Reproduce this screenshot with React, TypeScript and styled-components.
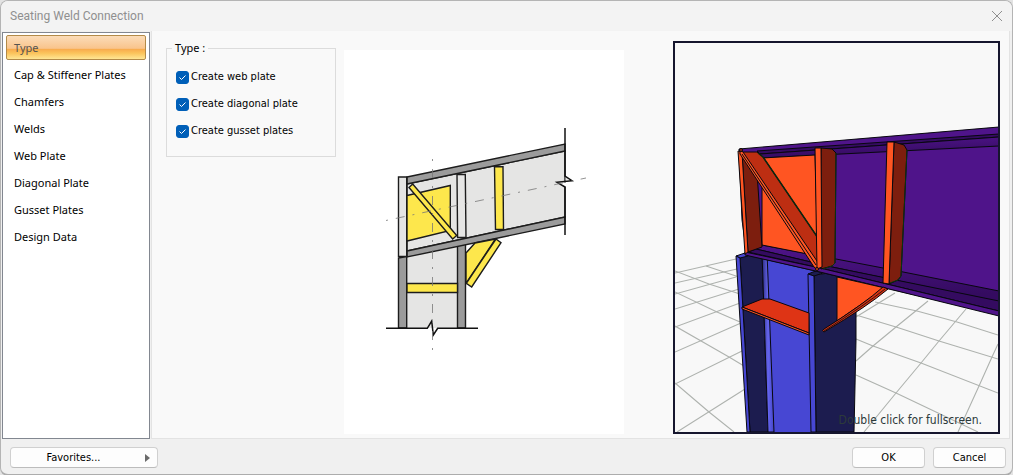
import React, { useState } from "react";
import styled, { createGlobalStyle } from "styled-components";

const GlobalStyle = createGlobalStyle`
  * { box-sizing: border-box; }
  body { margin: 0; background: #e3e3e3; }
`;

const uiFont = `"Noto Sans", "Open Sans", sans-serif`;
const formFont = `"DejaVu Sans Condensed", "DejaVu Sans", sans-serif`;

const Dialog = styled.div`
  display: flex;
  flex-direction: column;
  min-height: 100vh;
  background: #f0f0f0;
  border: 1px solid #b4b4b4;
  border-bottom: 2px solid #acacac;
  border-radius: 8px;
  font-family: ${uiFont};
  font-size: 11px;
  color: #000;
  overflow: hidden;
`;

const TitleBar = styled.header`
  display: flex;
  align-items: center;
  justify-content: space-between;
  height: 30px;
  padding: 0 9px;
  background: #f3f3f3;
`;

const Title = styled.h1`
  margin: 0;
  font-family: Roboto, ${uiFont};
  font-size: 12px;
  line-height: 16px;
  font-weight: 400;
  color: #8f8f8f;
`;

const CloseButton = styled.button`
  display: flex;
  padding: 0;
  border: 0;
  background: none;
`;

const Body = styled.div`
  display: flex;
  flex: 1;
  gap: 1px;
  padding: 0 2px 0 1px;
`;

const Sidebar = styled.nav`
  flex: none;
  width: 148px;
  margin-top: 1px;
  padding: 2px 3px;
  background: #fff;
  border: 1px solid #828790;
`;

const NavList = styled.ul`
  display: flex;
  flex-direction: column;
  gap: 2px;
  margin: 0;
  padding: 0;
  list-style: none;
`;

const NavItem = styled.button<{ $active: boolean }>`
  display: block;
  width: 100%;
  height: 25px;
  padding: 0 7px;
  border: 1px solid ${(p) => (p.$active ? "#b38a48" : "transparent")};
  border-radius: 2px;
  background: ${(p) =>
    p.$active
      ? "linear-gradient(#fbdcb8 0, #f9c48c 54%, #f8a94c 56%, #fbc45c 75%, #ffe694 100%)"
      : "transparent"};
  color: ${(p) => (p.$active ? "#56534f" : "#000")};
  font-family: inherit;
  font-size: 11px;
  line-height: 16px;
  text-align: left;
`;

const Page = styled.main`
  display: flex;
  flex: 1;
  align-items: flex-start;
  min-width: 0;
  padding: 10px 9px 4px 14px;
  background: #f9f9f9;
  border: solid #e3e3e3;
  border-width: 0 1px 1px;
`;

const Group = styled.fieldset`
  flex: none;
  width: 170px;
  margin: 0;
  padding: 15px 9px 18px;
  border: 1px solid #dcdcdc;
`;

const Legend = styled.legend`
  margin-left: -4px;
  padding: 0 3px;
  font-size: 11px;
  line-height: 14px;
`;

const CheckRow = styled.label`
  display: flex;
  align-items: center;
  gap: 2px;
  height: 14px;
  font-family: ${formFont};
  line-height: 14px;
  white-space: nowrap;
  & + & { margin-top: 13px; }
`;

const CheckBox = styled.span`
  display: grid;
  width: 13px;
  height: 13px;
  & > * { grid-area: 1 / 1; }
`;

const CheckInput = styled.input`
  appearance: none;
  width: 13px;
  height: 13px;
  margin: 0;
  border: 1px solid #8a8a8a;
  border-radius: 3px;
  background: #fff;
  &:checked { background: #005fb8; border-color: #005fb8; }
`;

const CheckMark = styled.svg`
  pointer-events: none;
`;

const Illustration = styled.div`
  flex: none;
  width: 280px;
  margin: 9px 0 0 8px;
  background: #fff;
`;

const Drawing = styled.svg`
  display: block;
  width: 100%;
`;

const Viewer = styled.div`
  position: relative;
  flex: none;
  width: 327px;
  margin-left: auto;
  background: #f8f8f8;
  border: 2px solid #16162e;
`;

const ViewerHint = styled.span`
  position: absolute;
  right: 16px;
  bottom: 4px;
  font-family: ${formFont};
  font-size: 12px;
  line-height: 16px;
  color: #2c3a3a;
`;

const Footer = styled.footer`
  display: flex;
  align-items: center;
  gap: 8px;
  height: 35px;
  padding: 2px 6px 0 9px;
`;

const PushButton = styled.button<{ $wide?: boolean }>`
  display: flex;
  align-items: center;
  justify-content: center;
  gap: 16px;
  width: ${(p) => (p.$wide ? "148px" : "73px")};
  height: 21px;
  padding: 0 7px;
  border: 1px solid #d0d0d0;
  border-bottom-color: #bcbcbc;
  border-radius: 4px;
  background: #fdfdfd;
  color: #000;
  font-family: ${formFont};
  font-size: 11px;
  line-height: 14px;
`;

const ButtonText = styled.span`
  flex: 1;
`;

const Spacer = styled.div`
  flex: 1;
`;

function SectionDrawing() {
  return (
    <Drawing viewBox="344 50 280 384" role="img" aria-label="Connection elevation">
      <g stroke="#1c1c1c" strokeWidth="1.4" strokeLinejoin="miter">
        <path d="M407 257L457 247V328H407Z" fill="#e5e5e4" stroke="none" />
        <path d="M407 184L565 151V217L407 251Z" fill="#e5e5e4" />
        <path d="M407 177L565 144V151L407 184Z" fill="#9b9b9b" />
        <path d="M457.500 245L465.500 243V328H457.500Z" fill="#9b9b9b" />
        <path d="M407 251L565 217V224L407 257Z" fill="#9b9b9b" />
        <path d="M398.500 177H406.700V256.500H398.500Z" fill="#e5e5e4" />
        <path d="M398.500 258L406.700 256.500V328H398.500Z" fill="#9b9b9b" />
        <path d="M457 174.500H465.300L466 237.500H457.600Z" fill="#e5e5e4" />
        <path d="M494.500 166.700H503L503.500 229.500H495.500Z" fill="#fde74c" />
        <path d="M407 195.500L450.300 185.500V230.500L407 241Z" fill="#fde74c" />
        <path d="M412.700 184L409 187.500L452.700 239L456.700 235.500Z" fill="#fde74c" />
        <path d="M407 283.500H457.500V292.500H407Z" fill="#fde74c" />
        <path d="M466 253L475 243L495.500 239L466 283.500Z" fill="#fde74c" />
        <path d="M496 239L501 242.700L471.700 287L466.300 283.300Z" fill="#fde74c" />
      </g>
      <path d="M565.700 176L571 180.500H565.700Z" fill="#e5e5e4" />
      <path d="M558 182.500H566V187Z" fill="#fff" />
      <g fill="none" stroke="#111" strokeWidth="1.500">
        <path d="M565 128V176L572 180.700L557 182.300L565 187V235" />
        <path d="M386 328.300H427.300L431.700 321L433.300 335L437.700 328.300H478" />
      </g>
      <g fill="none" stroke="#777" strokeWidth="0.800" strokeDasharray="9 8 2 8" strokeDashoffset="17">
        <path d="M386 220.500L586 178" />
        <path d="M432.500 159V356" />
      </g>
    </Drawing>
  );
}

function ModelView() {
  return (
    <Drawing viewBox="675 43 323 389" role="img" aria-label="Connection model">
      <defs>
        <linearGradient id="fillet" x1="0" x2="1" y1="0" y2="0">
          <stop offset="0" stopColor="#2a2a78" />
          <stop offset="0.500" stopColor="#6565ef" />
          <stop offset="1" stopColor="#4343c8" />
        </linearGradient>
        <linearGradient id="lip" x1="0" x2="0.200" y1="0" y2="1">
          <stop offset="0" stopColor="#4f148a" />
          <stop offset="1" stopColor="#340b60" />
        </linearGradient>
      </defs>
      <g fill="none" stroke="#aeb2ae" strokeWidth="1.100">
        <path d="M675 273L736 259M675 283L737 269M675 294L736 277M675 309L739 289M675 327L740 303M675 352L741 323M675 384L744 350M677 432L745 389" />
        <path d="M675 271L709 284L740 294M706 266L739 277M675 292L717 312L740 322M675 326L729 357L744 366M675 383L709 412L734 432" />
        <path d="M888 289L998 313M875 302L917 311L957 322L998 335M856 315L896 327L939 341L998 359M856 339L873 346L921 363L998 393M856 375L896 393L978 432" />
        <path d="M856 317L895 293M856 361L873 346L896 327L928 301M864 432L896 393L921 363L939 341L966 309M958 432L979 386L992 357L998 344" />
      </g>
      <g stroke="#08080f" strokeWidth="1" strokeLinejoin="round">
        <path d="M740 257L762 250L768 432H750Z" fill="#1c1c4f" />
        <path d="M762 252L820 258L812 432H768Z" fill="#4747d3" stroke="none" />
        <path d="M762 252H767L774 432H768Z" fill="url(#fillet)" />
        <path d="M736 256L745 253L748 256L740 258Z" fill="#4747d3" />
        <path d="M736 256L740 258L750 432H747Z" fill="#4747d3" />
        <path d="M814 275L837 272L856 277V340L854 432H816Z" fill="#1c1c4f" />
        <path d="M808 274L818 270L826 272L814 276Z" fill="#1c1c4f" />
        <path d="M808 274L814 276L816 432H811Z" fill="#4747d3" />
        <path d="M742 307L762 299H770L809 313V333Z" fill="#de3415" />
        <path d="M742 307L809 333V335L742 309Z" fill="#ff5522" />

        <path d="M739 149L999 127V315L820 272L747 255L742 220Z" fill="#4f148a" />
        <path d="M757 151L999 134V137L760 154Z" fill="#340b60" />
        <path d="M760 154L999 137V146L762 158Z" fill="url(#lip)" />
        <path d="M762 245L836 259L883 268L999 291V302L832 267L756 249Z" fill="url(#lip)" />
        <path d="M756 249L832 267L999 301V311L820 268L748 252Z" fill="#340b60" />
        <path d="M745 252L820 268L999 311V316L820 272L745 255Z" fill="#4f148a" />

        <path d="M762 158L815 155L818 256L762 245Z" fill="#ff5522" />
        <path d="M742 153L757 172L762 247L748 252Z" fill="#7d1e0e" />
        <path d="M738 151L742 152L748 252L745 254Z" fill="#ff5522" />
        <path d="M742 152L757 152L763 157L818 238V265Z" fill="#bd2e12" />
        <path d="M758 153L763 157L818 238" fill="none" strokeWidth="1.500" stroke="#0b260f" />
        <path d="M740 150L743 152L819 264L818 270L814 267L740 154Z" fill="#ff5522" />
        <path d="M742 154L816 265" fill="none" />
        <path d="M821 148L832 149L836 153L835 263L832 266L821 269Z" fill="#7d1e0e" />
        <path d="M836 153L835 263L832 266L823 269" fill="none" stroke="#0b3412" />
        <path d="M815 148H821L822 267L817 269Z" fill="#ff5522" />
        <circle cx="741" cy="150" r="1.500" fill="#a02b10" />
        <circle cx="817" cy="269" r="1.500" fill="#d84012" />
        <path d="M894 142L904 145L907 150L901 276L898 280L889 284Z" fill="#7d1e0e" />
        <path d="M907 150L901 276L898 280L890 283" fill="none" stroke="#0b3412" />
        <path d="M887 142H894L889 284L883 283Z" fill="#ff5522" />

        <path d="M837 277L885 288L837 321Z" fill="#ff5522" />
        <path d="M883 287L888 289Q868 306 824 332Q821 331 824 329Q864 304 883 287Z" fill="#d93412" />
        <path d="M885 289Q865 305 824 331" fill="none" strokeWidth="0.800" />
      </g>
    </Drawing>
  );
}

const pages = [
  "Type",
  "Cap & Stiffener Plates",
  "Chamfers",
  "Welds",
  "Web Plate",
  "Diagonal Plate",
  "Gusset Plates",
  "Design Data",
];

const options = ["Create web plate", "Create diagonal plate", "Create gusset plates"];

function CheckOption({ label }: { label: string }) {
  const [checked, setChecked] = useState(true);
  return (
    <CheckRow>
      <CheckBox>
        <CheckInput
          type="checkbox"
          checked={checked}
          onChange={(e) => setChecked(e.target.checked)}
        />
        {checked && (
          <CheckMark width="13" height="13" viewBox="0 0 13 13" aria-hidden="true">
            <path d="M3.500 6.500L5.500 8.500L9.500 4.500" fill="none" stroke="#fff" strokeWidth="1" />
          </CheckMark>
        )}
      </CheckBox>
      {label}
    </CheckRow>
  );
}

export default function App() {
  const [page, setPage] = useState("Type");
  return (
    <>
      <GlobalStyle />
      <Dialog role="dialog" aria-labelledby="dialog-title">
        <TitleBar>
          <Title id="dialog-title">Seating Weld Connection</Title>
          <CloseButton type="button" aria-label="Close">
            <svg width="12" height="12" viewBox="0 0 12 12" aria-hidden="true">
              <path d="M1 1L11 11M11 1L1 11" stroke="#8f8f8f" strokeWidth="1" />
            </svg>
          </CloseButton>
        </TitleBar>
        <Body>
          <Sidebar>
            <NavList>
              {pages.map((name) => (
                <li key={name}>
                  <NavItem type="button" $active={name === page} onClick={() => setPage(name)}>
                    {name}
                  </NavItem>
                </li>
              ))}
            </NavList>
          </Sidebar>
          <Page>
            <Group>
              <Legend>Type :</Legend>
              {options.map((label) => (
                <CheckOption key={label} label={label} />
              ))}
            </Group>
            <Illustration>
              <SectionDrawing />
            </Illustration>
            <Viewer>
              <ModelView />
              <ViewerHint>Double click for fullscreen.</ViewerHint>
            </Viewer>
          </Page>
        </Body>
        <Footer>
          <PushButton type="button" $wide>
            <ButtonText>Favorites...</ButtonText>
            <svg width="5" height="8" viewBox="0 0 5 8" aria-hidden="true">
              <path d="M0 0L5 4L0 8Z" fill="#6a6a6a" />
            </svg>
          </PushButton>
          <Spacer />
          <PushButton type="button">OK</PushButton>
          <PushButton type="button">Cancel</PushButton>
        </Footer>
      </Dialog>
    </>
  );
}
